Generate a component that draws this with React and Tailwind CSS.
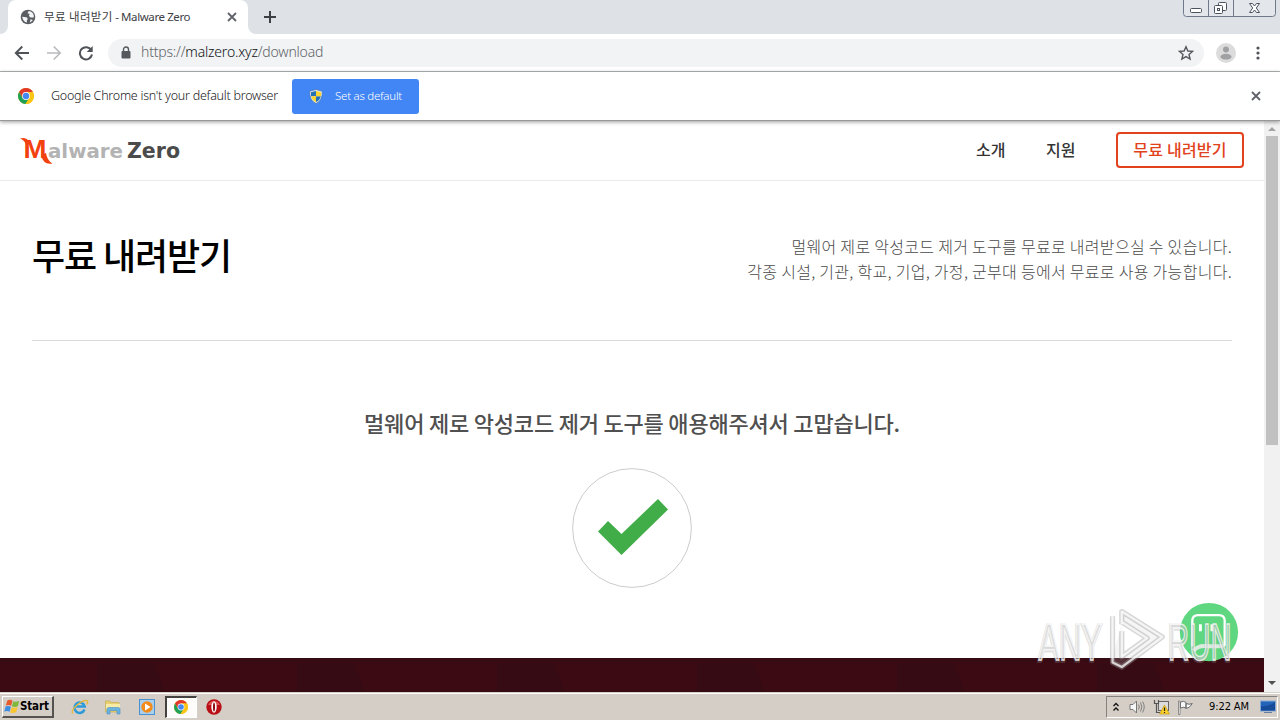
import React from "react";

const KR = "font-['Noto_Sans_CJK_KR',sans-serif]";
const UI = "font-['Noto_Sans','Noto_Sans_CJK_KR',sans-serif]";

function Chrome({ className }) {
  return (
    <svg viewBox="0 0 16 16" className={className}>
      <circle cx="8" cy="8" r="8" fill="#fbc516" />
      <path d="M8 4 H14.9 A8 8 0 0 0 1.1 4 L4.6 10Z" fill="#e0382c" />
      <path d="M1.1 4 A8 8 0 0 0 7.5 16 L11.4 10 L4.6 10Z" fill="#1fa055" />
      <path d="M8 4 H14.9 A8 8 0 0 1 7.5 16 L11.4 10Z" fill="#fbc516" />
      <circle cx="8" cy="8" r="3.900" fill="#fff" />
      <circle cx="8" cy="8" r="3.200" fill="#4688f1" />
    </svg>
  );
}

function Close({ className }) {
  return (
    <svg viewBox="0 0 10 10" className={className} stroke="#5f6368" strokeWidth="1.8">
      <path d="M1 1 L9 9 M9 1 L1 9" />
    </svg>
  );
}

function TabStrip() {
  return (
    <div className="flex h-[34px] shrink-0 items-start bg-[#dee1e6]">
      <svg viewBox="0 0 8 8" className="mt-[26px] h-2 w-2 shrink-0">
        <path d="M0 8 A8 8 0 0 0 8 0 V8Z" fill="#fff" />
      </svg>
      <div className="flex h-[34px] w-[240px] items-center rounded-t-lg bg-white pl-3">
        <svg viewBox="0 0 16 16" className="h-4 w-4 shrink-0">
          <circle cx="8" cy="8" r="7.3" fill="#5a5e63" />
          <path d="M2.2 7.8 L6.2 8.3 Q8 8.8 7.7 10.3 L6.8 11.2 L7 13.6 Q3 12.8 2.2 7.8Z M8.7 2 L7.5 4.2 L9.8 5 L8.8 6.8 L10.4 8.6 L13.8 8.4 Q14.2 4 10.6 2.4Z M10.6 10.2 L12.9 11 Q11.6 12.9 9.8 13.4Z" fill="#f4f5f6" />
        </svg>
        <span className={`${UI} ml-2 w-[164px] whitespace-nowrap text-[11.5px] leading-4 text-[#3c4043]`}>
          <span className="tracking-[0.300px]">무료 내려받기</span>
          <span className="tracking-[-0.400px]"> - Malware Zero</span>
        </span>
        <Close className="ml-[19px] h-[10px] w-[10px] shrink-0" />
      </div>
      <svg viewBox="0 0 8 8" className="mt-[26px] h-2 w-2 shrink-0">
        <path d="M8 8 A8 8 0 0 1 0 0 V8Z" fill="#fff" />
      </svg>
      <svg viewBox="0 0 12 12" className="ml-2 mt-[11px] h-3 w-3" stroke="#3c4043" strokeWidth="2">
        <path d="M6 0 V12 M0 6 H12" />
      </svg>
      <svg viewBox="0 0 93 17" className="ml-auto mr-[4px] h-[17px] w-[93px]" fill="none" stroke="#70798a">
        <path d="M.5 0 V13.5 Q.5 16.5 3.5 16.5 H89.5 Q92.5 16.5 92.5 13.5 V0 M25.5 0 V16 M50.5 0 V16" fill="#e3e6eb" />
        <g stroke="#4b5360" fill="#fff">
          <rect x="7.5" y="8.5" width="11" height="4" rx="1" />
          <rect x="35.5" y="2.5" width="8" height="8" rx="1" />
          <rect x="31.5" y="5.5" width="8" height="8" rx="1" />
          <rect x="34.500" y="8.500" width="2" height="2" />
          <path d="M66.500 3.500 h3 l2 2.500 l2 -2.500 h3 l-3.200 4.500 l3.200 4.500 h-3 l-2 -2.500 l-2 2.500 h-3 l3.200 -4.500 z" />
        </g>
      </svg>
    </div>
  );
}

function Toolbar() {
  return (
    <div className="flex h-[38px] shrink-0 items-center border-b border-[#b2b5b5] bg-white pl-[14px]">
      <svg viewBox="0 0 16 16" className="h-4 w-4" fill="none" stroke="#4f5358" strokeWidth="1.9">
        <path d="M15 8 H2 M8.300 1.500 L1.800 8 L8.300 14.500" />
      </svg>
      <svg viewBox="0 0 16 16" className="ml-4 h-4 w-4" fill="none" stroke="#b9bbbe" strokeWidth="1.7">
        <path d="M1 8 H14 M7.700 1.500 L14.200 8 L7.700 14.500" />
      </svg>
      <svg viewBox="0 0 16 16" className="ml-4 h-4 w-4" fill="none">
        <path d="M13.300 5.200 A6.100 6.100 0 1 0 14 9.500" stroke="#4f5358" strokeWidth="2" />
        <path d="M14.700 1 V7 H8.700Z" fill="#4f5358" />
      </svg>
      <div className="ml-[14px] flex h-7 w-[1096px] items-center rounded-full bg-[#f1f3f4] pl-[13px] pr-2.5">
        <svg viewBox="0 0 10 13" className="h-[13px] w-[10px]">
          <path d="M2.500 5.500 V3.500 A2.500 2.500 0 0 1 7.500 3.500 V5.500" fill="none" stroke="#55595e" strokeWidth="1.400" />
          <rect x=".5" y="5" width="9" height="7.500" rx="1" fill="#55595e" />
        </svg>
        <span className={`${UI} ml-[10px] whitespace-nowrap pb-px text-[14px] font-light leading-5 tracking-[-0.200px] text-[#5f6368]`}>https://<span className="text-[#101114]">malzero.xyz</span>/download</span>
        <svg viewBox="0 0 16 16" className="ml-auto h-4 w-4" fill="none" stroke="#55595e" strokeWidth="1.400">
          <path d="M8 1.700 L9.900 6 L14.500 6.400 L11 9.500 L12.100 14 L8 11.600 L3.900 14 L5 9.500 L1.500 6.400 L6.100 6Z" />
        </svg>
      </div>
      <svg viewBox="0 0 20 20" className="ml-3 h-5 w-5">
        <circle cx="10" cy="10" r="10" fill="#dcdcdd" />
        <circle cx="10" cy="6.500" r="3" fill="#a0a1a3" />
        <ellipse cx="10" cy="13.700" rx="5.600" ry="2.900" fill="#a0a1a3" />
      </svg>
      <svg viewBox="0 0 4 14" className="ml-5 h-[14px] w-1" fill="#505459">
        <circle cx="2" cy="2" r="1.600" /><circle cx="2" cy="7" r="1.600" /><circle cx="2" cy="12" r="1.600" />
      </svg>
    </div>
  );
}

function Shield() {
  return (
    <svg viewBox="0 0 14 15" className="h-[15px] w-[14px]">
      <path d="M7 .5 L13.300 2.300 Q13.800 11.500 7 14.500 Q.2 11.500 .7 2.300Z" fill="#dfe5e4" stroke="#3e6fae" strokeWidth=".6" />
      <path d="M7 2 V7.300 H2 V3.300Z M7 7.300 H11.800 Q11 11.300 7 13Z" fill="#2471b8" />
      <path d="M7 2 L12 3.300 V7.300 H7Z M2.200 7.300 H7 V13 Q3 11.300 2.200 7.300Z" fill="#fbd42f" />
    </svg>
  );
}

function InfoBar() {
  return (
    <div className="z-10 flex h-[49px] shrink-0 items-center border-b border-[#989898] bg-white pl-[18px] shadow-[0_1px_4px_rgba(0,0,0,0.4)]">
      <Chrome className="h-4 w-4" />
      <span className={`${UI} ml-[17px] w-[241px] whitespace-nowrap text-[12.500px] font-light tracking-[-0.250px] text-[#18191b]`}>Google Chrome isn't your default browser</span>
      <div className="flex h-[35px] w-[127px] items-center rounded-[3px] bg-[#4285f4] pl-[17px]">
        <Shield />
        <span className={`${UI} ml-3 whitespace-nowrap pb-px text-[11.500px] font-light tracking-[-0.250px] text-white`}>Set as default</span>
      </div>
      <Close className="ml-auto mr-[19px] h-[10px] w-[10px]" />
    </div>
  );
}

function Logo() {
  return (
    <svg viewBox="0 0 162 30" className="h-[30px] w-[162px]">
      <path d="M0 3.500 Q6 1.500 9.500 7 L6.500 10.500 Q4.500 5 0 3.500Z M21 20 L26 18 Q27 25.500 32.500 28.500 Q23.500 30.500 21 20Z" fill="#f2410f" />
      <text x="3.500" y="23" textLength="23" lengthAdjust="spacingAndGlyphs" fontFamily="Liberation Sans" fontWeight="700" fontSize="26" fill="#f2410f">M</text>
      <text x="28" y="22.500" textLength="75" lengthAdjust="spacingAndGlyphs" fontFamily="DejaVu Sans" fontWeight="700" fontSize="20" fill="#b3b3b3">alware</text>
      <text x="107" y="22.500" textLength="53" lengthAdjust="spacingAndGlyphs" fontFamily="DejaVu Sans" fontWeight="700" fontSize="21" fill="#4b4b4b">Zero</text>
    </svg>
  );
}

function Header() {
  return (
    <header className={`flex h-[60px] shrink-0 items-center border-b border-[#ebebeb] pb-px pl-5 pr-5 text-[16px] font-medium text-[#333] ${KR}`}>
      <Logo />
      <nav className="ml-auto flex items-center">
        <span className="mr-10 w-[30px] whitespace-nowrap pb-[3px]">소개</span>
        <span className="mr-10 w-[30px] whitespace-nowrap pb-[3px]">지원</span>
        <span className="flex h-9 w-32 items-center justify-center whitespace-nowrap rounded border-2 border-[#e2421b] pb-[3px] tracking-[0.200px] text-[#e2421b]">무료 내려받기</span>
      </nav>
    </header>
  );
}

function Content() {
  return (
    <main className={`flex h-[477px] shrink-0 flex-col px-8 ${KR}`}>
      <div className="flex h-[160px] justify-between border-b border-[#d9d9d9] pt-[53px]">
        <h1 className="-mt-[2px] whitespace-nowrap text-[36px] font-medium leading-[44px] tracking-[-1.100px] text-black">무료 내려받기</h1>
        <p className="whitespace-nowrap text-right text-[16px] font-light leading-[25px] tracking-[0.300px] text-[#4a4a4a]">
          멀웨어 제로 악성코드 제거 도구를 무료로 내려받으실 수 있습니다.<br />
          각종 시설, 기관, 학교, 기업, 가정, 군부대 등에서 무료로 사용 가능합니다.
        </p>
      </div>
      <p className="mt-[65px] whitespace-nowrap text-center text-[22px] font-medium leading-8 tracking-[-0.200px] text-[#505050]">멀웨어 제로 악성코드 제거 도구를 애용해주셔서 고맙습니다.</p>
      <svg viewBox="0 0 120 120" className="mx-auto mt-[30px] h-[120px] w-[120px]">
        <circle cx="60" cy="60" r="59.400" fill="#fff" stroke="#ccc" />
        <path d="M26 63.500 L36 53 L49.500 66 L86 31 L96 41.500 L49.500 87Z" fill="#41ad49" />
      </svg>
    </main>
  );
}

function Footer() {
  return (
    <svg viewBox="0 0 1264 34" className="h-[34px] w-[1264px] shrink-0">
      <rect width="1264" height="34" fill="#3c0a13" />
      {[-103, 97, 297, 497, 697, 897, 1097].map((x) => (
        <path key={x} d={`M${x} 5 H${x + 57} L${x + 68} 34 H${x}Z`} fill="#360b14" />
      ))}
      <rect width="1264" height="4" fill="#360b14" />
    </svg>
  );
}

function Watermark() {
  return (
    <svg viewBox="0 0 204 64" className="absolute left-[1035px] top-[600px] h-[74px] w-[236px] overflow-visible">
      <circle cx="150.400" cy="27.700" r="25.200" fill="#5fd780" />
      <g fill="none" stroke="#fff">
        <path d="M136 40 V18 Q136 13 141 13 H159 Q164 13 164 18 V40" strokeWidth="2" />
        <path d="M143 21 V27 M153 21 V27" strokeWidth="2.500" />
        <path d="M137 44 Q141 39 149 40 H163" stroke="#dcebe0" strokeWidth="3.500" />
      </g>
      <g fontFamily="Liberation Sans Narrow, Liberation Sans" fontSize="45" fill="#d8d8d8" fillOpacity=".3">
        <text x="2.800" y="52.500" textLength="55" lengthAdjust="spacingAndGlyphs" stroke="#999" strokeOpacity=".3" strokeWidth="3">ANY</text>
        <text x="114.800" y="52.500" textLength="55" lengthAdjust="spacingAndGlyphs" stroke="#999" strokeOpacity=".3" strokeWidth="3">RUN</text>
        <text x="3" y="51.500" textLength="55" lengthAdjust="spacingAndGlyphs" stroke="#fff" strokeOpacity=".8" strokeWidth="1.300">ANY</text>
        <text x="115" y="51.500" textLength="55" lengthAdjust="spacingAndGlyphs" stroke="#fff" strokeOpacity=".8" strokeWidth="1.300">RUN</text>
      </g>
      <g strokeLinejoin="round">
        <path d="M67 49 V14 M75 21 V10 L110 32 L75 58 L67 54 V49 M75 27 V49 L97 33 L75 19" fill="#ccc" fillOpacity=".2" stroke="#999" strokeOpacity=".4" strokeWidth="4.500" />
        <path d="M67 49 V14 M75 21 V10 L110 32 L75 58 L67 54 V49 M75 27 V49 L97 33 L75 19" fill="none" stroke="#fff" strokeOpacity=".75" strokeWidth="2" />
      </g>
    </svg>
  );
}

function Scrollbar() {
  return (
    <div className="flex w-4 shrink-0 flex-col items-center bg-[#f1f1f1]">
      <svg viewBox="0 0 8 4" className="mt-[6px] h-1 w-2"><path d="M0 4 L4 0 L8 4Z" fill="#a3a3a3" /></svg>
      <div className="mt-[5px] h-[309px] w-3 bg-[#c1c1c1]" />
      <svg viewBox="0 0 8 4" className="mb-[7px] mt-auto h-1 w-2"><path d="M0 0 H8 L4 4Z" fill="#505050" /></svg>
    </div>
  );
}

function Taskbar() {
  return (
    <div className="flex h-7 shrink-0 items-center border-t border-[#d4d0c8] bg-[#d5cec7] pl-[2px] pr-[2px] pt-px shadow-[inset_0_1px_0_#fff]">
      <div className="flex h-[22px] w-[52px] items-center border-b-2 border-l border-r-2 border-t border-b-[#55524f] border-l-white border-r-[#55524f] border-t-white pl-px">
        <svg viewBox="0 0 15 14" className="h-[15px] w-[16px] shrink-0">
          <path d="M3 1.500 Q5.500 0 8 1.500 L6.700 6.300 Q4 5 1.700 6.300Z" fill="#e75a2b" />
          <path d="M8.700 2 Q11.500 3.200 14.300 1.700 L13 6.700 Q10 8 7.400 6.800Z" fill="#80b83b" />
          <path d="M1.500 7 Q4 5.800 6.500 7.200 L5.200 12 Q2.700 10.600 .2 12Z" fill="#3d8de2" />
          <path d="M7.200 7.700 Q10 8.900 12.800 7.500 L11.500 12.200 Q8.500 13.800 5.900 12.600Z" fill="#fbc532" />
        </svg>
        <span className="whitespace-nowrap font-['DejaVu_Sans_Condensed','DejaVu_Sans',sans-serif] text-[11.500px] font-bold tracking-[-0.150px] text-black">Start</span>
      </div>
      <svg viewBox="0 0 18 16" className="ml-[17px] h-4 w-[18px]">
        <path d="M13.500 10.500 A5.200 5.200 0 1 1 13.700 7.500 H5" fill="none" stroke="#2c9ada" strokeWidth="2.500" />
        <path d="M1.800 14.500 Q-.5 12 6 6 Q13 .2 16.200 1.800 Q17.500 3 15.500 5.500" fill="none" stroke="#e4b93f" strokeWidth="1.400" />
      </svg>
      <svg viewBox="0 0 18 16" className="ml-[15px] h-4 w-[18px]">
        <path d="M1.500 2 H6 L7 3.500 H15 V13 H1.500Z" fill="#e9cf70" stroke="#c5ad55" strokeWidth=".7" />
        <path d="M2 5 H16 V10 H2Z" fill="#f8eba6" />
        <path d="M3 15 V10 Q3 8.500 5 8.500 H14 Q16 8.500 16 10 V15 H13 V11.500 H6 V15Z" fill="#69b4e2" stroke="#4c91c2" strokeWidth=".6" />
      </svg>
      <svg viewBox="0 0 16 16" className="ml-[17px] h-4 w-4">
        <rect x=".5" y=".5" width="15" height="15" fill="#a9cfec" stroke="#4c91cf" />
        <circle cx="8" cy="8" r="5.700" fill="#f28a1c" />
        <path d="M6 4.500 L11.500 8 L6 11.500Z" fill="#fff" />
      </svg>
      <div className="ml-[10px] flex h-[22px] w-8 items-center justify-center border-b border-l-2 border-r border-t-2 border-b-white border-l-[#44413f] border-r-white border-t-[#44413f] bg-[#fdfcfb] pb-[2px] pr-[2px]">
        <Chrome className="h-[14px] w-[14px]" />
      </div>
      <svg viewBox="0 0 16 16" className="ml-[9px] h-4 w-4">
        <circle cx="8" cy="8" r="7.700" fill="#b90f16" />
        <path d="M2 6 A6.500 6.500 0 0 1 14 6Z" fill="#dc5352" />
        <ellipse cx="8" cy="8" rx="2.700" ry="5.700" fill="#fff" />
        <ellipse cx="8" cy="8" rx="1" ry="4.500" fill="#8b0b10" />
      </svg>
      <div className="ml-auto flex h-[22px] w-[172px] items-center border border-b-white border-l-[#85817c] border-r-white border-t-[#85817c] pl-[6px]">
        <svg viewBox="0 0 6 10" className="h-[10px] w-[6px]" fill="none" stroke="#111" strokeWidth="1.300"><path d="M.5 4 L3 1.500 L5.500 4 M.5 8.500 L3 6 L5.500 8.500" /></svg>
        <svg viewBox="0 0 16 14" className="ml-[10px] h-[14px] w-4" fill="none" stroke="#777">
          <path d="M1 4.500 H4 L7.500 1 V13 L4 9.500 H1Z" fill="#f6f6f6" />
          <path d="M9.500 4.500 Q11.200 7 9.500 9.500 M11.500 2.500 Q14.200 7 11.500 11.500 M13.500 1.500 Q17 7 13.500 12.500" strokeWidth=".9" />
        </svg>
        <svg viewBox="0 0 17 16" className="ml-2 h-4 w-[17px]">
          <rect x="5.500" y="2.500" width="10" height="9" fill="#dcdcdc" stroke="#666" />
          <path d="M1.500 1 V4.500 H5.500 V1 M3.500 4.500 V13.500 H7" fill="none" stroke="#555" strokeWidth="1.200" />
          <path d="M11.500 6 L16.500 15 H6.500Z" fill="#fbd02b" stroke="#c79b14" strokeWidth=".7" />
          <path d="M11.500 8.500 V12 M11.500 13 V14" stroke="#222" strokeWidth="1.200" />
        </svg>
        <svg viewBox="0 0 16 15" className="ml-[7px] h-[15px] w-4" fill="#fafafa" stroke="#6b6b6b">
          <path d="M3.500 2 Q7 .5 9 2.500 V8 Q6.500 6.500 3.500 8Z M9 3.500 Q12 5 15.300 3.500 Q12.500 8.500 9 8.500Z" />
          <path d="M1.500 1 H3 V14.500 H1.500Z" strokeWidth=".7" />
        </svg>
        <span className="ml-4 w-[42px] whitespace-nowrap font-['DejaVu_Sans_Condensed','Noto_Sans',sans-serif] text-[11px] tracking-[-0.100px] text-black">9:22 AM</span>
        <svg viewBox="0 0 16 14" className="ml-[9px] h-[14px] w-4 shrink-0">
          <rect x=".5" y="1" width="15" height="10" fill="#2463ba" stroke="#86a9d1" />
          <path d="M1 6 Q9 7 15 2 V10.500 H1Z" fill="#164b9a" />
          <path d="M4 12.500 H12" stroke="#68809d" />
        </svg>
      </div>
    </div>
  );
}

export default function App() {
  return (
    <div className="relative flex h-[720px] w-[1280px] flex-col overflow-hidden bg-white">
      <TabStrip />
      <Toolbar />
      <InfoBar />
      <div className="flex h-[571px] shrink-0">
        <div className="flex w-[1264px] flex-col">
          <Header />
          <Content />
          <Footer />
        </div>
        <Scrollbar />
      </div>
      <Taskbar />
      <Watermark />
    </div>
  );
}
